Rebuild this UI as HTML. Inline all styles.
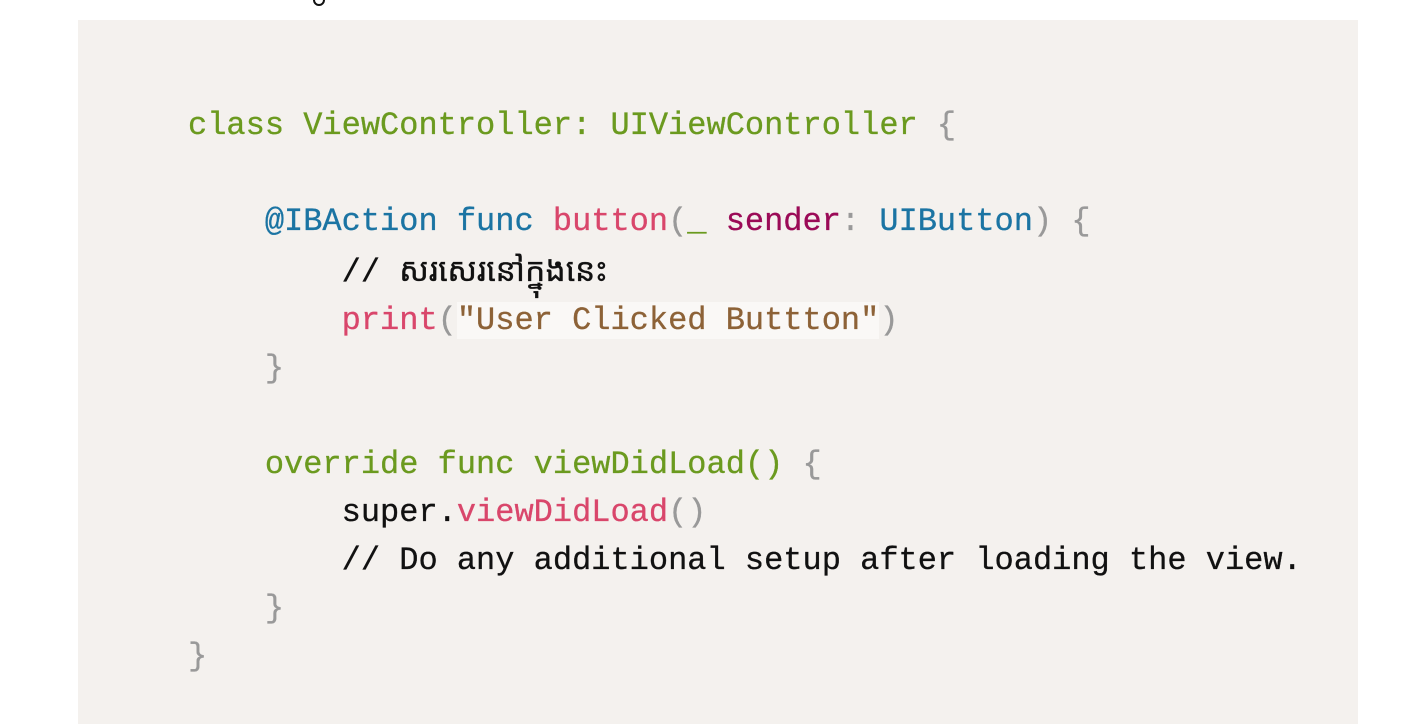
<!DOCTYPE html>
<html><head><meta charset="utf-8"><style>
html,body{margin:0;padding:0;background:#fff;width:1420px;height:724px;overflow:hidden}
.blk{position:absolute;left:78px;top:20px;width:1280px;height:704px;background:#f4f1ee}
pre{position:absolute;left:188px;top:102px;margin:0;font-family:"Liberation Mono","DejaVu Sans Mono",monospace;font-size:32px;line-height:48px;color:#111;-webkit-text-stroke:0.3px currentColor}
.g{color:#6b9a1f}.b{color:#1b74a3}.p{color:#d9466b}.m{color:#9b0a57}.s{color:#8d6237;background:#faf8f6}.x{color:#999}
.dot{position:absolute;left:313px;top:-6px;width:8px;height:8px;border:2.5px solid #111;border-radius:50%}
</style></head><body>
<div class="dot"></div>
<div class="blk"></div>
<pre><span class="g">class ViewController: UIViewController</span> <span class="x">{</span>

    <span class="b">@IBAction func</span> <span class="p">button</span><span class="x">(</span><span class="g">_</span> <span class="m">sender</span><span class="x">:</span> <span class="b">UIButton</span><span class="x">)</span> <span class="x">{</span>
        // <span style="font-family:'Noto Sans Khmer','Khmer OS','DejaVu Sans',sans-serif">សរសេរនៅក្នុងនេះ</span>
        <span class="p">print</span><span class="x">(</span><span class="s">"User Clicked Buttton"</span><span class="x">)</span>
    <span class="x">}</span>

    <span class="g">override func viewDidLoad()</span> <span class="x">{</span>
        super.<span class="p">viewDidLoad</span><span class="x">()</span>
        // Do any additional setup after loading the view.
    <span class="x">}</span>
<span class="x">}</span></pre>
</body></html>
